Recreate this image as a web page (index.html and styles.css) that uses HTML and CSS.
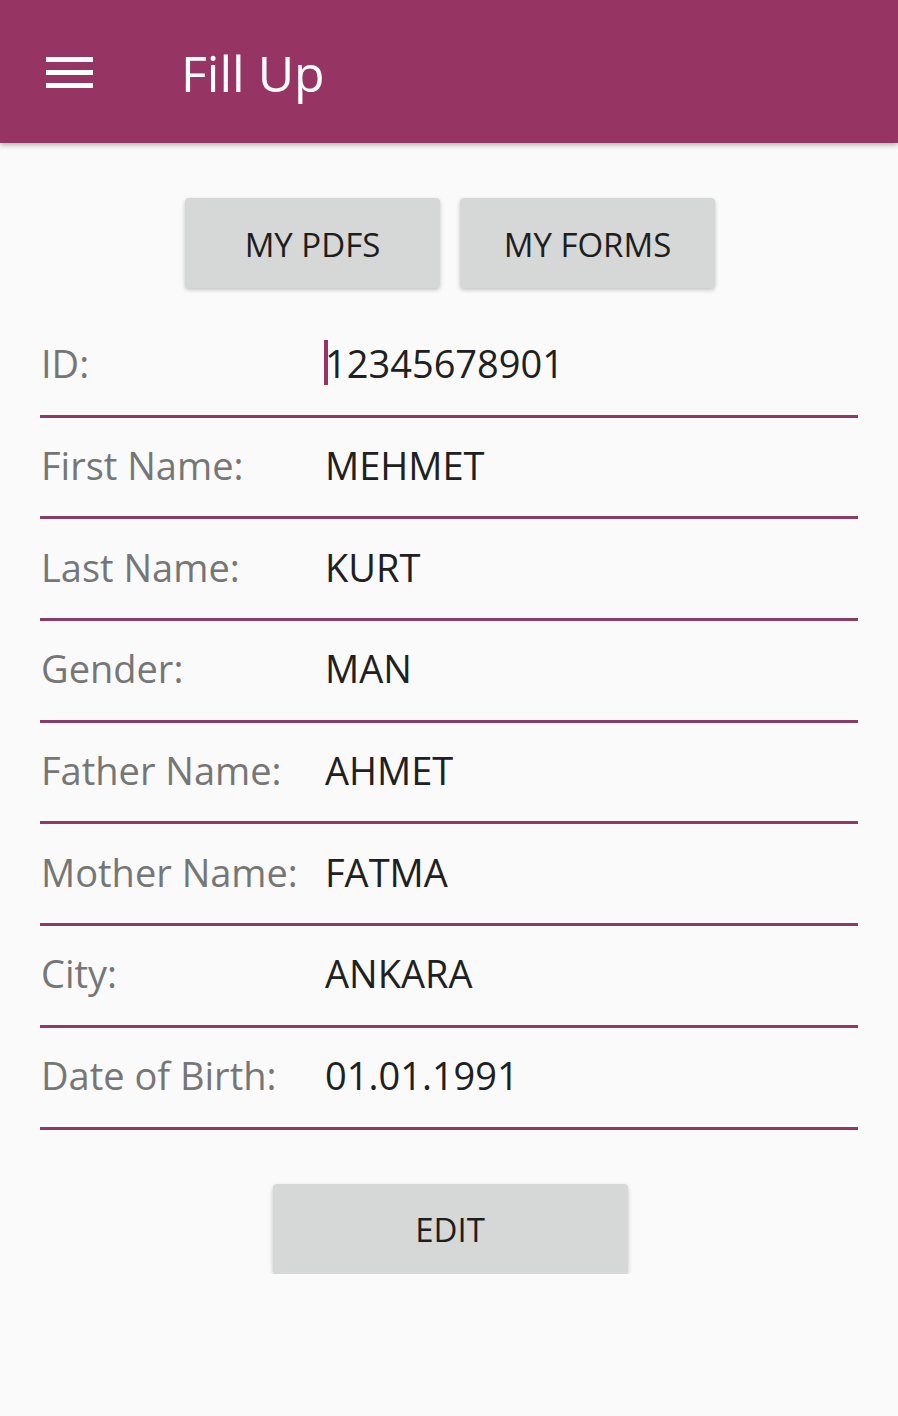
FILE: index.html
```html
<!DOCTYPE html>
<html>
<head>
<meta charset="utf-8">
<link rel="stylesheet" href="styles.css">
</head>
<body>
<header class="appbar">
  <svg class="menu" width="48" height="32" viewBox="0 0 48 32">
    <rect x="0" y="0" width="47" height="5" fill="#fff"/>
    <rect x="0" y="13" width="47" height="5" fill="#fff"/>
    <rect x="0" y="26" width="47" height="5" fill="#fff"/>
  </svg>
  <h1 class="title">Fill Up</h1>
</header>
<main class="content">
  <div class="top-buttons">
    <button class="btn">MY PDFS</button>
    <button class="btn">MY FORMS</button>
  </div>
  <div class="form">
    <div class="row"><span class="label">ID:</span><span class="value"><span class="cursor"></span>12345678901</span></div>
    <div class="row"><span class="label">First Name:</span><span class="value">MEHMET</span></div>
    <div class="row"><span class="label">Last Name:</span><span class="value">KURT</span></div>
    <div class="row"><span class="label">Gender:</span><span class="value">MAN</span></div>
    <div class="row"><span class="label">Father Name:</span><span class="value">AHMET</span></div>
    <div class="row"><span class="label">Mother Name:</span><span class="value">FATMA</span></div>
    <div class="row"><span class="label">City:</span><span class="value">ANKARA</span></div>
    <div class="row"><span class="label">Date of Birth:</span><span class="value">01.01.1991</span></div>
  </div>
  <div class="bottom-buttons">
    <button class="btn btn-edit">EDIT</button>
  </div>
</main>
</body>
</html>
```
FILE: styles.css
```css
html, body {
  margin: 0;
  padding: 0;
  background: #fafafa;
  font-family: "Open Sans", "Noto Sans", sans-serif;
}
.appbar {
  height: 143px;
  background: #963463;
  display: flex;
  align-items: center;
  box-shadow: 0 2px 5px rgba(0,0,0,0.3);
  position: relative;
  z-index: 1;
}
.menu {
  margin-left: 46px;
  margin-top: 2px;
}
.title {
  margin: 0 0 0 87px;
  color: #fff;
  font-weight: 400;
  font-size: 50px;
  line-height: 1;
  padding-top: 2px;
}
.content {
  padding: 55px 40px 0 40px;
}
.top-buttons {
  display: flex;
  justify-content: center;
  gap: 20px;
  padding-left: 2px;
}
.btn {
  width: 255px;
  height: 90px;
  border: none;
  border-radius: 4px;
  background: #d6d7d7;
  box-shadow: 0 2px 4px rgba(0,0,0,0.22);
  font-family: "Open Sans", "Noto Sans", sans-serif;
  font-size: 33px;
  color: #1e1e1e;
  padding: 0;
  padding-top: 2px;
}
.form {
  margin-top: 28px;
}
.row {
  height: 101.7px;
  box-sizing: border-box;
  border-bottom: 3px solid #8c3b64;
  display: flex;
  align-items: center;
  font-size: 38px;
  padding-bottom: 4px;
}
.label {
  width: 284px;
  color: #767676;
  padding-left: 1px;
}
.value {
  color: #202020;
  position: relative;
}
.cursor {
  position: absolute;
  left: -1px;
  top: 3px;
  width: 4px;
  height: 45px;
  background: #963463;
}
.bottom-buttons {
  display: flex;
  justify-content: center;
  margin-top: 54px;
  padding-left: 2px;
}
.btn-edit {
  width: 355px;
}
```
